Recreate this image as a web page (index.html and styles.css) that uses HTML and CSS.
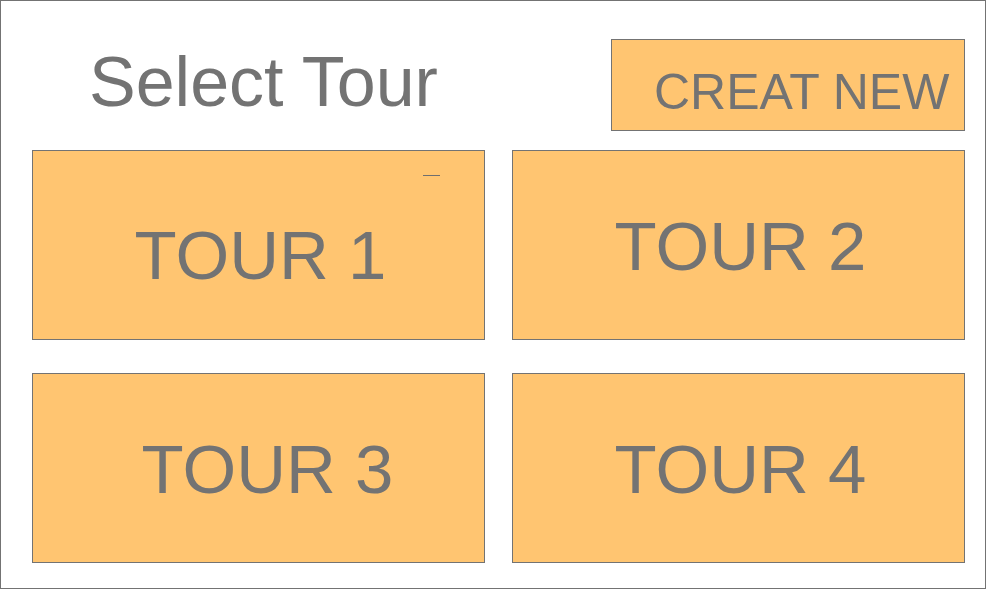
FILE: index.html
```html
<!DOCTYPE html>
<html lang="en">
<head>
  <meta charset="UTF-8" />
  <meta name="viewport" content="width=device-width, initial-scale=1.0"/>
  <title>Select Tour</title>
  <link rel="stylesheet" href="styles.css">
</head>
<body>
  <div class="frame">
    <header class="top-bar">
      <h1 class="title">Select Tour</h1>
      <a href="#" class="create-btn">CREAT NEW</a>
    </header>

    <main class="tour-grid">
      <a href="#" class="tour-card tour-card-first">
        <span class="tour-mark"></span>
        TOUR 1
      </a>
      <a href="#" class="tour-card">TOUR 2</a>
      <a href="#" class="tour-card tour-card-shifted">TOUR 3</a>
      <a href="#" class="tour-card">TOUR 4</a>
    </main>
  </div>
</body>
</html>
```

FILE: styles.css
```css
body {
  font-family: "Liberation Sans", Arial, sans-serif;
  margin: 0;
  padding: 0;
  background: white;
  color: #737373;
}

.frame {
  box-sizing: border-box;
  width: 986px;
  height: 589px;
  border: 1px solid #737373;
  padding: 38px 20px 0 31px;
}

.top-bar {
  display: flex;
  justify-content: space-between;
  align-items: flex-start;
  margin-bottom: 19px;
}

.title {
  margin: 8px 0 0 57px;
  font-size: 70px;
  font-weight: normal;
  line-height: 1;
}

.create-btn {
  box-sizing: border-box;
  display: block;
  width: 354px;
  height: 92px;
  padding: 27px 0 0 42px;
  background: #ffc571;
  border: 1px solid #737373;
  color: #737373;
  font-size: 50px;
  line-height: 1;
  text-decoration: none;
}

.tour-grid {
  display: grid;
  grid-template-columns: 453px 453px;
  grid-auto-rows: 190px;
  column-gap: 27px;
  row-gap: 33px;
}

.tour-card {
  position: relative;
  box-sizing: border-box;
  display: flex;
  align-items: center;
  justify-content: center;
  padding: 2px 0 0 4px;
  background: #ffc571;
  border: 1px solid #737373;
  color: #737373;
  font-size: 69px;
  line-height: 1;
  text-decoration: none;
}

.tour-card-first {
  padding-top: 21px;
}

.tour-card-shifted {
  padding-left: 18px;
}

.tour-mark {
  position: absolute;
  left: 390px;
  top: 24px;
  width: 17px;
  height: 1px;
  background: #6f6f6f;
}
```
